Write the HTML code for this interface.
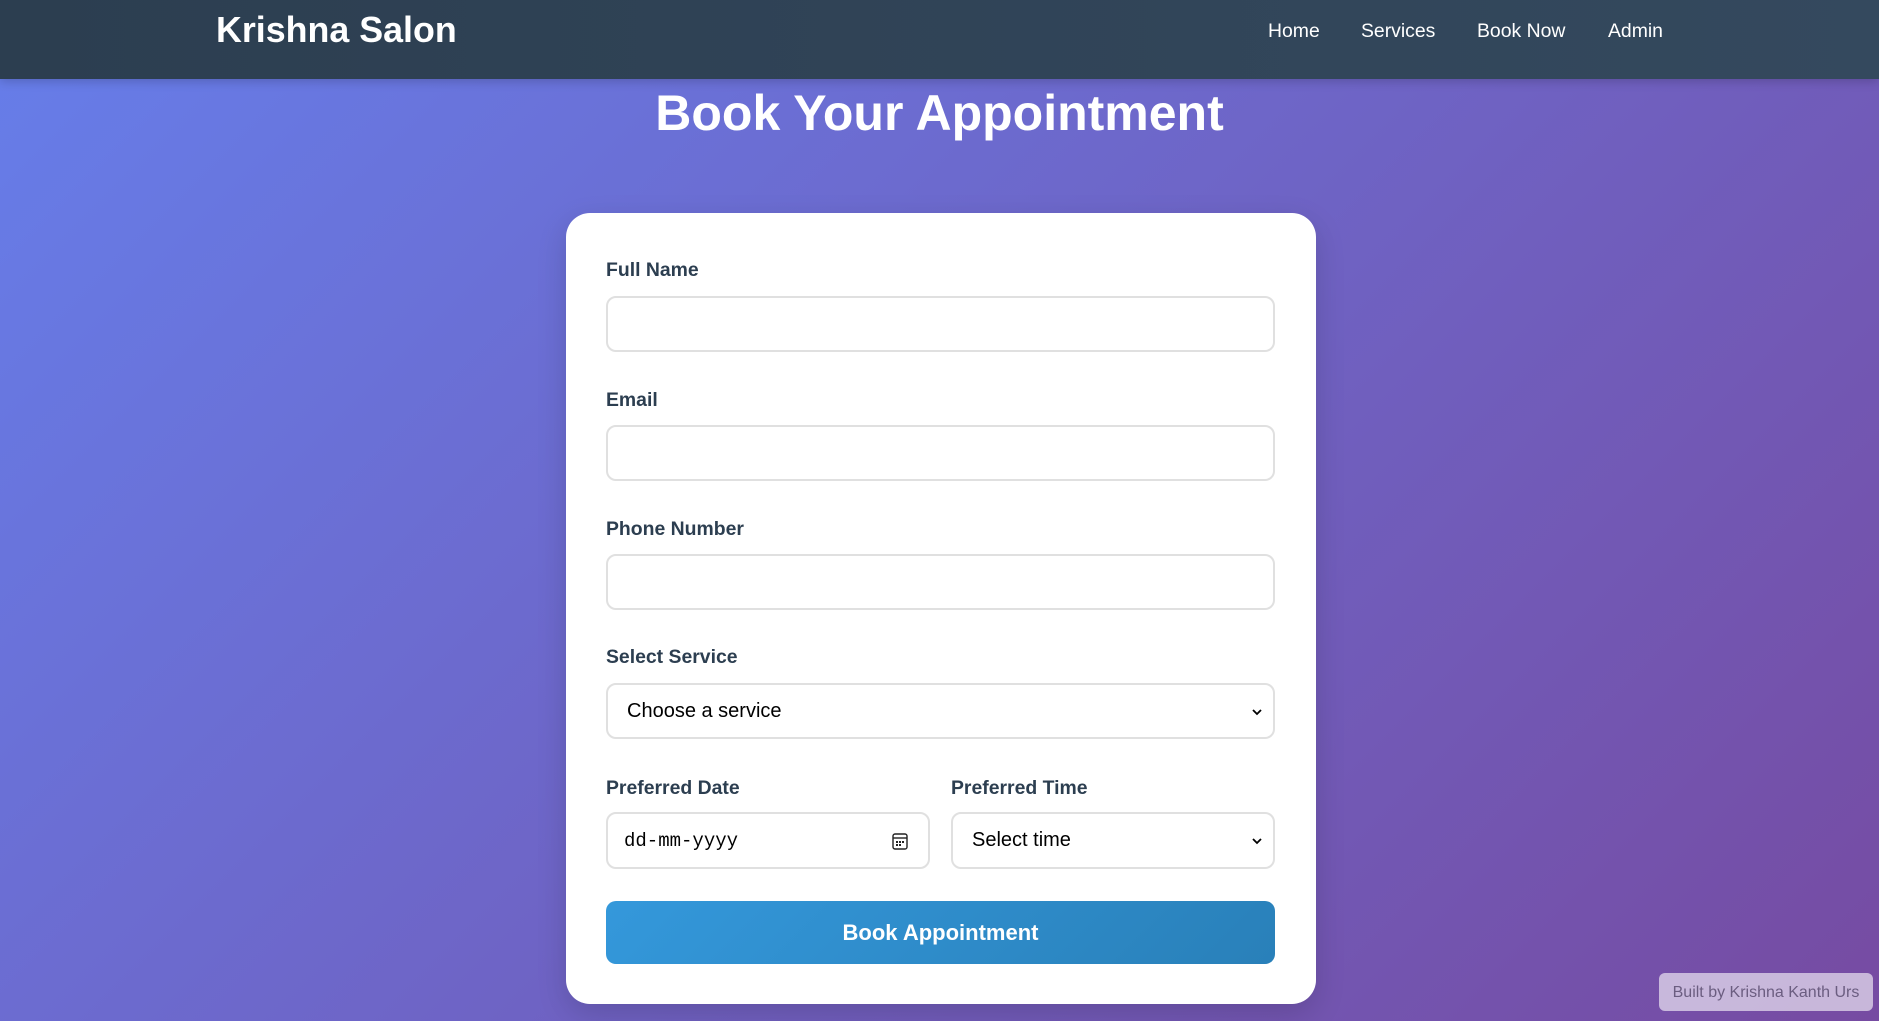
<!DOCTYPE html>
<html><head><meta charset="utf-8"><style>
*{box-sizing:border-box;margin:0;padding:0}
html,body{width:1879px;height:1021px;overflow:hidden}
body{font-family:"Liberation Sans",Arial,sans-serif;background:linear-gradient(135deg,#667eea 0%,#764ba2 100%);position:relative}
nav{position:absolute;left:0;top:0;width:1879px;height:79px;background:linear-gradient(90deg,#2c3e50,#34495e);box-shadow:0 2px 10px rgba(0,0,0,.2)}
.logo{position:absolute;left:216px;top:9px;color:#fff;font-weight:bold;font-size:35.8px;line-height:42px}
.nav a{position:absolute;top:19px;color:#fff;font-size:19.4px;line-height:24px;text-decoration:none}
h1{position:absolute;left:0;width:1879px;top:83px;text-align:center;color:#fff;font-size:50px;line-height:60px;font-weight:bold}
.card{position:absolute;left:566px;top:213px;width:750px;height:791px;background:#fff;border-radius:24px;box-shadow:0 10px 30px rgba(0,0,0,.15)}
.lbl{position:absolute;color:#2c3e50;font-weight:bold;font-size:19.4px;line-height:22px}
.inp{position:absolute;border:2.4px solid #e0e0e0;border-radius:10px;height:56px;background:#fff}
.sel{font-size:20px;color:#000;line-height:53px;padding-left:19px}
.chev{position:absolute;right:10px;top:21px}
.btn{position:absolute;left:40px;top:688px;width:669px;height:63px;border-radius:10px;background:linear-gradient(135deg,#3498db,#2980b9);color:#fff;font-weight:bold;font-size:22px;text-align:center;line-height:64px}
.badge{position:absolute;left:1659px;top:973px;width:214px;height:38px;border-radius:6px;background:rgba(255,255,255,.6);color:#6b5d80;font-size:16px;line-height:39px;text-align:center}
</style></head><body>
<nav><div class="logo">Krishna Salon</div>
<div class="nav"><a style="left:1268px">Home</a><a style="left:1361px">Services</a><a style="left:1477px">Book Now</a><a style="left:1608px">Admin</a></div></nav>
<h1>Book Your Appointment</h1>
<div class="card">
<div class="lbl" style="left:40px;top:46px">Full Name</div>
<div class="inp" style="left:40px;top:83px;width:669px"></div>
<div class="lbl" style="left:40px;top:176px">Email</div>
<div class="inp" style="left:40px;top:212px;width:669px"></div>
<div class="lbl" style="left:40px;top:305px">Phone Number</div>
<div class="inp" style="left:40px;top:341px;width:669px"></div>
<div class="lbl" style="left:40px;top:433px">Select Service</div>
<div class="inp sel" style="left:40px;top:470px;width:669px">Choose a service<svg class="chev" width="12" height="12" viewBox="0 0 12 12"><path d="M2 4l4 4 4-4" fill="none" stroke="#000" stroke-width="1.8"/></svg></div>
<div class="lbl" style="left:40px;top:564px">Preferred Date</div>
<div class="lbl" style="left:385px;top:564px">Preferred Time</div>
<div class="inp" style="left:40px;top:599px;width:324px;height:57px;font-family:'Liberation Mono',monospace;font-size:19px;line-height:55px;padding-left:16px">dd-mm-yyyy<svg style="position:absolute;left:284px;top:18px" width="16" height="18" viewBox="0 0 16 18"><rect x="1" y="2" width="14" height="15" rx="2" fill="none" stroke="#222" stroke-width="1.4"/><line x1="1" y1="6" x2="15" y2="6" stroke="#222" stroke-width="1.4"/><g fill="#222"><rect x="4" y="9" width="2" height="2"/><rect x="7" y="9" width="2" height="2"/><rect x="10" y="9" width="2" height="2"/><rect x="4" y="12" width="2" height="2"/><rect x="7" y="12" width="2" height="2"/></g></svg></div>
<div class="inp sel" style="left:385px;top:599px;width:324px;height:57px">Select time<svg class="chev" width="12" height="12" viewBox="0 0 12 12"><path d="M2 4l4 4 4-4" fill="none" stroke="#000" stroke-width="1.8"/></svg></div>
<div class="btn">Book Appointment</div>
</div>
<div class="badge">Built by Krishna Kanth Urs</div>
</body></html>
